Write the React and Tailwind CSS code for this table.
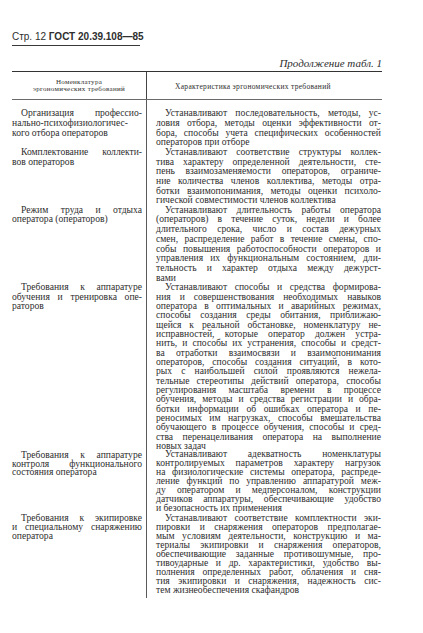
import React from 'react';

const serif = { fontFamily: '"Liberation Serif", "DejaVu Serif", serif' };

// each row: left lines (nomenclature), right lines (characteristic), lh = line pitch of the scan
const rows = [
  {
    lh: 9.8,
    left: ['Организация профессио-', 'нально-психофизиологичес-', 'кого отбора операторов'],
    right: [
      'Устанавливают последовательность, методы, ус-',
      'ловия отбора, методы оценки эффективности от-',
      'бора, способы учета специфических особенностей',
      'операторов при отборе',
    ],
  },
  {
    lh: 9.6,
    left: ['Комплектование коллекти-', 'вов операторов'],
    right: [
      'Устанавливают соответствие структуры коллек-',
      'тива характеру определенной деятельности, сте-',
      'пень взаимозаменяемости операторов, ограниче-',
      'ние количества членов коллектива, методы отра-',
      'ботки взаимопонимания, методы оценки психоло-',
      'гической совместимости членов коллектива',
    ],
  },
  {
    lh: 9.7,
    left: ['Режим труда и отдыха', 'оператора (операторов)'],
    right: [
      'Устанавливают длительность работы оператора',
      '(операторов) в течение суток, недели и более',
      'длительного срока, число и состав дежурных',
      'смен, распределение работ в течение смены, спо-',
      'собы повышения работоспособности операторов и',
      'управления их функциональным состоянием, дли-',
      'тельность и характер отдыха между дежурст-',
      'вами',
    ],
  },
  {
    lh: 9.35,
    left: ['Требования к аппаратуре', 'обучения и тренировка опе-', 'раторов'],
    right: [
      'Устанавливают способы и средства формирова-',
      'ния и совершенствования необходимых навыков',
      'оператора в оптимальных и аварийных режимах,',
      'способы создания среды обитания, приближаю-',
      'щейся к реальной обстановке, номенклатуру не-',
      'исправностей, которые оператор должен устра-',
      'нить, и способы их устранения, способы и средст-',
      'ва отработки взаимосвязи и взаимопонимания',
      'операторов, способы создания ситуаций, в кото-',
      'рых с наибольшей силой проявляются нежела-',
      'тельные стереотипы действий оператора, способы',
      'регулирования масштаба времени в процессе',
      'обучения, методы и средства регистрации и обра-',
      'ботки информации об ошибках оператора и пе-',
      'реносимых им нагрузках, способы вмешательства',
      'обучающего в процессе обучения, способы и сред-',
      'ства перенацеливания оператора на выполнение',
      'новых задач',
    ],
  },
  {
    lh: 8.9,
    left: ['Требования к аппаратуре', 'контроля функционального', 'состояния оператора'],
    right: [
      'Устанавливают адекватность номенклатуры',
      'контролируемых параметров характеру нагрузок',
      'на физиологические системы оператора, распреде-',
      'ление функций по управлению аппаратурой меж-',
      'ду оператором и медперсоналом, конструкции',
      'датчиков аппаратуры, обеспечивающие удобство',
      'и безопасность их применения',
    ],
  },
  {
    lh: 9.0,
    left: ['Требования к экипировке', 'и специальному снаряжению', 'оператора'],
    right: [
      'Устанавливают соответствие комплектности эки-',
      'пировки и снаряжения операторов предполагае-',
      'мым условиям деятельности, конструкцию и ма-',
      'териалы экипировки и снаряжения операторов,',
      'обеспечивающие заданные противошумные, про-',
      'тивоударные и др. характеристики, удобство вы-',
      'полнения определенных работ, облачения и сня-',
      'тия экипировки и снаряжения, надежность сис-',
      'тем жизнеобеспечения скафандров',
    ],
  },
];

function Line({ text, justify, indent, lh }) {
  const st = { height: lh, lineHeight: `${lh}px` };
  if (!justify) {
    return <div className={`whitespace-nowrap ${indent ? 'pl-[9px]' : ''}`} style={st}>{text}</div>;
  }
  return (
    <div className={`flex justify-between whitespace-nowrap ${indent ? 'pl-[9px]' : ''}`} style={st}>
      {text.split(' ').map((w, i) => <span key={i}>{w}</span>)}
    </div>
  );
}

function Para({ lines, lh }) {
  return (
    <div>
      {lines.map((t, i) => (
        <Line key={i} text={t} lh={lh} indent={i === 0} justify={i < lines.length - 1} />
      ))}
    </div>
  );
}

export default function App() {
  return (
    <div className="w-[423px] h-[633px] bg-white text-[#2e2e2e] overflow-hidden" style={serif}>
      <div className="pt-[31px] pl-[12px]">
        <div
          className="w-[128px] h-[15px] border-b border-[#3a3a3a] text-[10px] leading-[12px] whitespace-nowrap"
          style={{ fontFamily: '"Liberation Sans", Arial, sans-serif' }}
        >
          Стр. 12 <span className="font-bold">ГОСТ 20.39.108—85</span>
        </div>
      </div>

      <div className="w-[382px] mt-[11px] h-[12px] leading-[12px] text-right italic text-[11px]">
        Продолжение табл. 1
      </div>

      <div className="ml-[12px] w-[370px] mt-[2px] border-t-[1.5px] border-[#333]">
        {/* header */}
        <div className="flex h-[28px] border-b border-[#6a6a6a]">
          <div className="w-[134px] flex flex-col items-center justify-center text-[7px] leading-[7px] tracking-[0.3px]">
            <div>Номенклатура</div>
            <div>эргономических требований</div>
          </div>
          <div className="w-px bg-[#444]" />
          <div className="flex-1 flex items-center pl-[28px] pt-[2px] text-[7.5px] tracking-[0.3px]">
            Характеристика эргономических требований
          </div>
        </div>

        {/* body */}
        <div className="flex text-[9.6px]">
          <div className="w-[130px] pt-[8px] pb-[4px]">
            {rows.map((r, i) => (
              <div key={i} style={{ height: r.right.length * r.lh }}>
                <Para lines={r.left} lh={r.lh} />
              </div>
            ))}
          </div>
          <div className="ml-[4px] w-px bg-[#5a5a5a]" />
          <div className="ml-[9px] w-[225px] pt-[8px]">
            {rows.map((r, i) => (
              <Para key={i} lines={r.right} lh={r.lh} />
            ))}
          </div>
        </div>
      </div>
    </div>
  );
}
